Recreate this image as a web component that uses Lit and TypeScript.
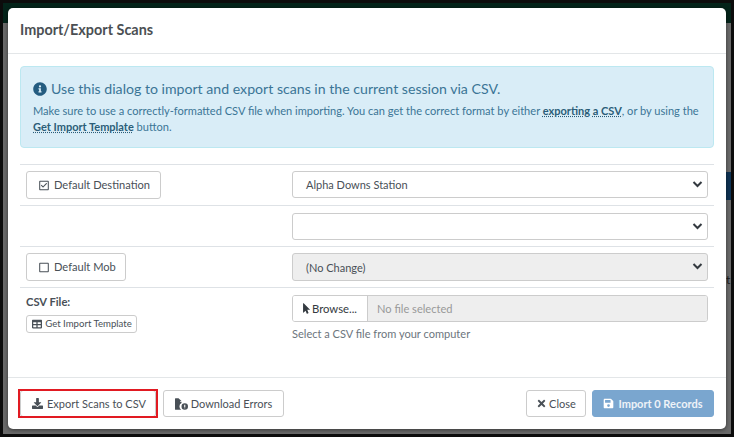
import { LitElement, html, css } from "lit";
import { customElement } from "lit/decorators.js";

const ic = (vb: string, d: string, cls = "ic") => html`<svg class=${cls} viewBox=${vb} fill="currentColor"><path d=${d}></path></svg>`;
const INFO = "M256 8C119 8 8 119 8 256s111 248 248 248 248-111 248-248S393 8 256 8zm0 110a42 42 0 1 1 0 84 42 42 0 0 1 0-84zm56 254c0 7-5 12-12 12h-88c-7 0-12-5-12-12v-24c0-7 5-12 12-12h12v-64h-12c-7 0-12-5-12-12v-24c0-7 5-12 12-12h64c7 0 12 5 12 12v100h12c7 0 12 5 12 12z";
const CHECK = "M400 32H48C21 32 0 53 0 80v352c0 27 21 48 48 48h352c27 0 48-21 48-48V80c0-27-21-48-48-48zm-6 400H54c-3 0-6-3-6-6V86c0-3 3-6 6-6h340c3 0 6 3 6 6v340c0 3-3 6-6 6zM362 178 189 350c-5 5-12 5-17 0L87 264c-5-5-5-12 0-17l19-19c5-5 12-5 17 0l58 58 145-144c5-5 12-5 17 0l19 19c5 5 5 12 0 17z";
const SQUARE = "M400 32H48C21 32 0 53 0 80v352c0 27 21 48 48 48h352c27 0 48-21 48-48V80c0-27-21-48-48-48zm-6 400H54c-3 0-6-3-6-6V86c0-3 3-6 6-6h340c3 0 6 3 6 6v340c0 3-3 6-6 6z";
const TABLE = "M464 32H48C21 32 0 53 0 80v352c0 27 21 48 48 48h416c27 0 48-21 48-48V80c0-27-21-48-48-48zM224 416H64v-96h160v96zm0-160H64v-96h160v96zm224 160H288v-96h160v96zm0-160H288v-96h160v96z";
const POINTER = "M302 316H196l56 136c4 9 0 20-10 24l-49 21c-9 4-20 0-24-10l-53-129-87 89C17 459 0 452 0 437V24C0 8 19 1 29 12l285 293c12 11 3 31-12 31z";
const DOWNLOAD = "M216 0h80c13 0 24 11 24 24v168h88c18 0 27 21 14 34L270 378c-8 8-20 8-28 0L90 226c-13-13-4-34 14-34h88V24c0-13 11-24 24-24zm296 376v112c0 13-11 24-24 24H24c-13 0-24-11-24-24V376c0-13 11-24 24-24h147l49 49c20 20 52 20 72 0l49-49h147c13 0 24 11 24 24z";
const FILEX = "M224 136V0H24C11 0 0 11 0 24v464c0 13 11 24 24 24h250a176 176 0 0 1 14-301V160H248c-13 0-24-11-24-24zM288 121 167 7c-5-4-11-7-17-7h-6V0h80v128h64v-7zM432 224a144 144 0 1 0 0 288 144 144 0 0 0 0-288zm24 224h-48v-40h48v40zm0-64h-48v-96h48v96z";
const TIMES = "M242 256l100-100c12-12 12-32 0-44l-22-22c-12-12-32-12-44 0L176 190 76 90c-12-12-32-12-44 0L10 112c-12 12-12 32 0 44l100 100L10 356c-12 12-12 32 0 44l22 22c12 12 32 12 44 0l100-100 100 100c12 12 32 12 44 0l22-22c12-12 12-32 0-44z";
const SAVE = "M433 129l-84-84a48 48 0 0 0-34-14H48C21 31 0 53 0 79v352c0 27 21 48 48 48h352c27 0 48-21 48-48V163c0-13-5-25-15-34zM224 416a64 64 0 1 1 0-128 64 64 0 0 1 0 128zm96-304v100c0 7-5 12-12 12H76c-7 0-12-5-12-12V108c0-7 5-12 12-12h228c3 0 6 1 8 3l5 5c2 2 3 5 3 8z";

@customElement("app-root")
export class AppRoot extends LitElement {
  static styles = css`
    :host { display: block; width: 734px; height: 437px; overflow: hidden; font-family: Lato, "Noto Sans", sans-serif; color: #495057; }
    * { box-sizing: border-box; }
    .frame { position: relative; width: 734px; height: 437px; background: #6a6a6a; border: 3px solid #0c0c0c; overflow: hidden; }
    .band { position: absolute; left: 0; right: 0; top: 0; height: 20px; background: #04241a; }
    .strip { position: absolute; right: 0; top: 169px; width: 5px; height: 28px; background: #0f3354; }
    .frag { position: absolute; left: 723px; top: 269px; font-size: 12px; line-height: 16px; color: #1a1a1a; }
    .modal { position: absolute; left: 5px; top: 5px; width: 718px; height: 421px; background: #fff; border-radius: 5px; display: flex; flex-direction: column; box-shadow: 0 1px 4px rgba(0,0,0,.5); }
    .head { height: 46px; padding: 0 12px 2px; display: flex; align-items: center; border-bottom: 1px solid #e3e6e8; flex: none; }
    .head h5 { margin: 0; font-size: 14.4px; font-weight: 700; color: #4b4f53; }
    .body { flex: 1; padding: 12px 12px 0; display: flex; flex-direction: column; }
    .alert { height: 82px; background: #d9edf7; border: 1px solid #bce8f1; border-radius: 4px; padding: 12px; flex: none; font-size: 11.07px; line-height: 16px; }
    .lead { font-size: 14.13px; line-height: 20px; display: flex; align-items: center; gap: 4px; color: #3b7596; margin-bottom: 4px; }
    .lead .ic { width: 14px; height: 14px; color: #245c80; }
    .alert a { color: #2b5d78; font-weight: 700; font-size: 11px; text-decoration: underline dotted; }
    .alert p { margin: 0; color: #3b7596; }
    .rows { margin-top: 16px; }
    .row { display: grid; grid-template-columns: 266px 1fr; border-top: 1px solid #dee2e6; padding: 6px; height: 41px; align-items: start; }
    .row.second { padding-top: 7px; }
    .row.file { height: auto; padding: 7px 6px 0; }
    .btn { display: inline-flex; align-items: center; justify-content: center; gap: 4px; background: #fff; border: 1px solid #ccc; border-radius: 3px; color: #495057; font: 400 11px/16px Lato, sans-serif; white-space: nowrap; padding: 0; }
    .ic { width: 11px; height: 11px; flex: none; }
    .tog { height: 28px; justify-self: start; justify-content: flex-start; padding-left: 12px; gap: 5px; font-size: 11.1px; }
    .tog .ic { width: 10px; height: 11px; }
    .w135 { width: 135px; }
    .w100 { width: 100px; }
    .sel { position: relative; height: 27px; border: 1px solid #ccc; border-radius: 3px; background: #fff; padding: 0 13px; display: flex; align-items: center; font-size: 11px; color: #495057; width: 416px; justify-self: end; }
    .sel.dis { background: #eee; height: 28px; }
    .chev { position: absolute; right: 4px; top: 8px; width: 11px; height: 9px; }
    .lab { font-size: 11.2px; font-weight: 700; line-height: 14px; color: #495057; margin: 0 0 4px; }
    .tpl { height: 18px; width: 111px; font-size: 9.6px; gap: 3px; padding-left: 1px; }
    .tpl .ic { width: 10px; height: 10px; }
    .fg { width: 416px; justify-self: end; }
    .fin { display: flex; height: 27px; border: 1px solid #ccc; border-radius: 3px; overflow: hidden; }
    .brw { width: 75px; flex: none; display: flex; align-items: center; justify-content: center; gap: 2px; background: #fff; border-right: 1px solid #ccc; font-size: 11.3px; color: #343a40; }
    .brw .ic { width: 7px; height: 11px; }
    .nofile { flex: 1; background: #eee; display: flex; align-items: center; padding-left: 9px; font-size: 11.1px; color: #999; }
    .hint { font-size: 11.05px; line-height: 14px; color: #6c757d; margin-top: 5px; }
    .foot { height: 52px; flex: none; border-top: 1px solid #e3e6e8; display: flex; align-items: center; padding: 0 12px; gap: 6px; }
    .foot .btn { height: 27px; gap: 4px; }
    .sp { flex: 1; }
    .exp { position: relative; width: 136px; margin-right: 1px; padding-left: 2px; }
    .exp::after { content: ""; position: absolute; inset: -2px -3px; border: 2px solid #e11a22; }
    .foot .dl { width: 121px; gap: 3px; }
    .dl .ic { width: 13px; height: 12px; }
    .imp { background: #7aa6cf; border-color: #7aa6cf; color: #eef3f8; font-weight: 700; width: 122px; }
    .imp .ic { color: #fff; }
    .cls { width: 60px; }
    .foot .cls { gap: 2px; }
  `;

  render() {
    const chev = html`<svg class="chev" viewBox="0 0 11 9"><path d="M1.5 2l4 4 4-4" fill="none" stroke="#343a40" stroke-width="2"></path></svg>`;
    return html`<div class="frame">
      <div class="band"></div>
      <div class="strip"></div>
      <span class="frag">t</span>
      <div class="modal">
        <div class="head"><h5>Import/Export Scans</h5></div>
        <div class="body">
          <div class="alert">
            <div class="lead">${ic("0 0 512 512", INFO)}<span>Use this dialog to import and export scans in the current session via CSV.</span></div>
            <p>Make sure to use a correctly-formatted CSV file when importing. You can get the correct format by either <a>exporting a CSV</a>, or by using the <a>Get Import Template</a> button.</p>
          </div>
          <div class="rows">
            <div class="row">
              <button class="btn tog w135">${ic("0 0 448 512", CHECK)}Default Destination</button>
              <div class="sel">Alpha Downs Station${chev}</div>
            </div>
            <div class="row second"><span></span><div class="sel">${chev}</div></div>
            <div class="row">
              <button class="btn tog w100">${ic("0 0 448 512", SQUARE)}Default Mob</button>
              <div class="sel dis">(No Change)${chev}</div>
            </div>
            <div class="row file">
              <div><div class="lab">CSV File:</div><button class="btn tpl">${ic("0 0 512 512", TABLE)}Get Import Template</button></div>
              <div class="fg">
                <div class="fin"><div class="brw">${ic("0 0 320 512", POINTER)}Browse...</div><div class="nofile">No file selected</div></div>
                <div class="hint">Select a CSV file from your computer</div>
              </div>
            </div>
          </div>
        </div>
        <div class="foot">
          <button class="btn exp">${ic("0 0 512 512", DOWNLOAD)}Export Scans to CSV</button>
          <button class="btn dl">${ic("0 0 576 512", FILEX)}Download Errors</button>
          <span class="sp"></span>
          <button class="btn cls">${ic("0 0 352 512", TIMES)}Close</button>
          <button class="btn imp">${ic("0 0 448 512", SAVE)}Import 0 Records</button>
        </div>
      </div>
    </div>`;
  }
}
